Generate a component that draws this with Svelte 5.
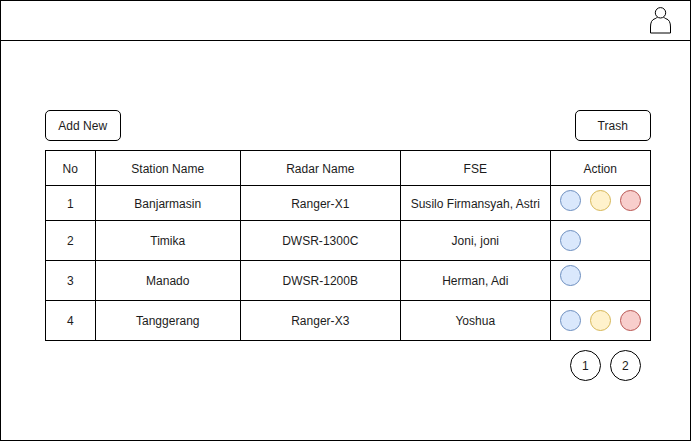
<script>
  const columns = ['No', 'Station Name', 'Radar Name', 'FSE', 'Action'];
  const rows = [
    { no: 1, station: 'Banjarmasin', radar: 'Ranger-X1', fse: 'Susilo Firmansyah, Astri', actions: ['view', 'edit', 'remove'], kind: 'short raised' },
    { no: 2, station: 'Timika', radar: 'DWSR-1300C', fse: 'Joni, joni', actions: ['view'], kind: '' },
    { no: 3, station: 'Manado', radar: 'DWSR-1200B', fse: 'Herman, Adi', actions: ['view'], kind: 'raised' },
    { no: 4, station: 'Tanggerang', radar: 'Ranger-X3', fse: 'Yoshua', actions: ['view', 'edit', 'remove'], kind: '' }
  ];
  const pages = [1, 2];
</script>

<div class="frame">
  <header>
    <svg class="user" width="23" height="28" viewBox="0 0 23 28" fill="none" stroke="#000" stroke-width="1">
      <circle cx="11.5" cy="6.8" r="5.2" />
      <path d="M8.2 11.2Q7.6 12.3 6.2 12.6C2.8 13.5 1.5 16.5 1.5 21V27H21.5V21C21.5 16.5 20.2 13.5 16.8 12.6Q15.4 12.3 14.8 11.2" />
    </svg>
  </header>
  <main>
    <div class="toolbar">
      <button>Add New</button>
      <button>Trash</button>
    </div>
    <div class="table">
      <div class="row short">
        {#each columns as column}
          <div class="cell">{column}</div>
        {/each}
      </div>
      {#each rows as row}
        <div class="row {row.kind}">
          <div class="cell">{row.no}</div>
          <div class="cell">{row.station}</div>
          <div class="cell">{row.radar}</div>
          <div class="cell">{row.fse}</div>
          <div class="cell actions">
            {#each row.actions as action}
              <span class="dot {action}"></span>
            {/each}
          </div>
        </div>
      {/each}
    </div>
    <nav>
      {#each pages as page}
        <button class="page">{page}</button>
      {/each}
    </nav>
  </main>
</div>

<style>
  :global(body) {
    margin: 0;
    background: #fff;
  }
  .frame, .frame * {
    box-sizing: border-box;
  }
  .frame {
    width: 691px;
    height: 441px;
    border: 1px solid #000;
    background: #fff;
    color: #1c1c1c;
    font: 12px/14px "Liberation Sans", Arial, sans-serif;
    letter-spacing: 0.02px;
  }
  header {
    height: 40px;
    border-bottom: 1px solid #000;
    display: flex;
    justify-content: flex-end;
    padding: 5px 18px 0 0;
  }
  .user {
    display: block;
  }
  main {
    padding: 69px 39px 0 44px;
  }
  .toolbar {
    display: flex;
    justify-content: space-between;
    margin-bottom: 9px;
  }
  button {
    width: 76px;
    height: 31px;
    border: 1px solid #000;
    border-radius: 5px;
    background: #fff;
    color: inherit;
    font: inherit;
    letter-spacing: inherit;
    padding: 1px 0.5px 0 0;
  }
  .table {
    width: 606px;
    border: solid #000;
    border-width: 1px 0 0 1px;
  }
  .row {
    display: grid;
    grid-template-columns: 50px 145px 160px 150px 100px;
    height: 40px;
  }
  .row.short {
    height: 35px;
  }
  .cell {
    display: flex;
    align-items: center;
    justify-content: center;
    border: solid #000;
    border-width: 0 1px 1px 0;
    padding: 1px 0.5px 0 0;
    white-space: nowrap;
  }
  .cell.actions {
    align-items: flex-start;
    justify-content: flex-start;
    gap: 9px;
    padding: 9px 0 0 9px;
  }
  .raised .cell.actions {
    padding-top: 4px;
  }
  .dot {
    width: 21px;
    height: 21px;
    border: 1px solid;
    border-radius: 50%;
  }
  .view {
    background: #dae8fc;
    border-color: #6c8ebf;
  }
  .edit {
    background: #fff2cc;
    border-color: #d6b656;
  }
  .remove {
    background: #f8cecc;
    border-color: #b85450;
  }
  nav {
    display: flex;
    justify-content: flex-end;
    gap: 9px;
    padding: 9px 10px 0 0;
  }
  .page {
    width: 31px;
    height: 31px;
    border-radius: 50%;
  }
</style>
